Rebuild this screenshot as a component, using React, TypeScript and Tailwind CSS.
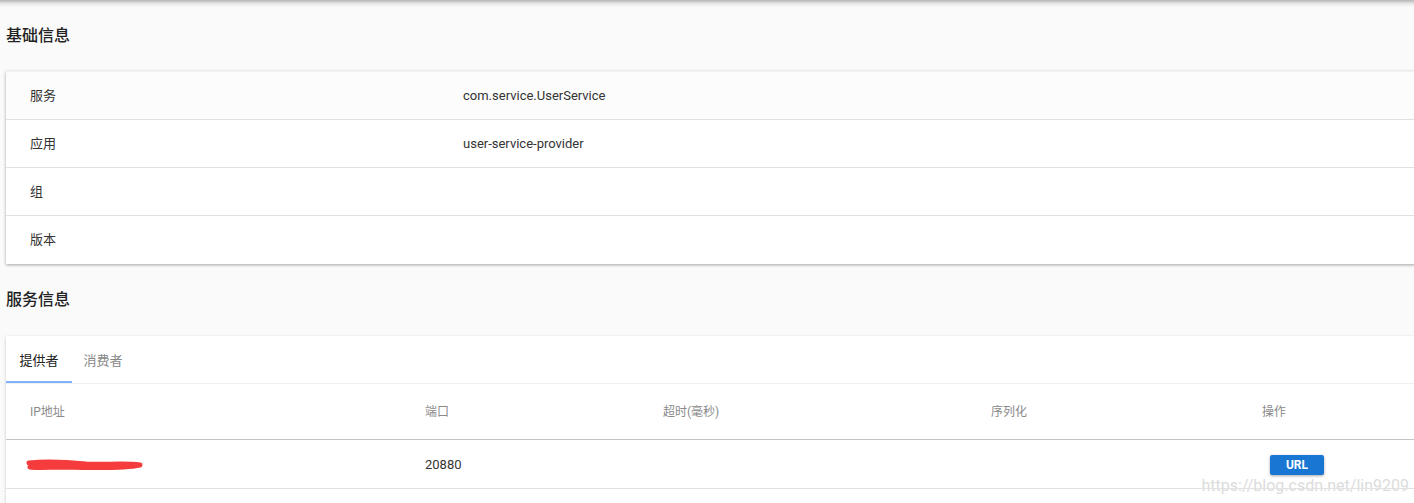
const font = "font-['Roboto','Noto_Sans_CJK_SC',sans-serif]";

const basicRows = [
  { label: '服务', value: 'com.service.UserService' },
  { label: '应用', value: 'user-service-provider' },
  { label: '组', value: '' },
  { label: '版本', value: '' },
];

const cols = ['w-[395px]', 'w-[238px]', 'w-[328px]', 'w-[271px]', 'flex-1'];

function Scribble() {
  return (
    <svg width="120" height="16" viewBox="0 0 120 16" className="block">
      <path
        d="M3 6 C20 4 40 5 60 7 C80 8 100 6 114 8 C100 11 70 11 40 10 C25 10 10 11 4 10"
        fill="none"
        stroke="#f53b3b"
        strokeWidth="5"
        strokeLinecap="round"
        strokeLinejoin="round"
      />
      <path d="M8 8 L112 8" stroke="#f53b3b" strokeWidth="4" strokeLinecap="round" />
    </svg>
  );
}

export default function App() {
  return (
    <div className={`${font} relative h-[503px] w-[1414px] overflow-hidden bg-[#fafafa] pl-[6px] text-[13px] text-[#333]`}>
      <div className="absolute left-0 top-0 h-[7px] w-full bg-gradient-to-b from-[#b5b5b5] via-[#e6e6e6] to-transparent" />

      <div className="flex h-[71px] items-center text-[16px] font-medium text-[#222]">基础信息</div>

      <div className="w-[1440px] border-t border-[#f2f2f2] bg-white shadow-[0_1px_3px_rgba(0,0,0,0.35)]">
        {basicRows.map((r, i) => (
          <div
            key={r.label}
            className={`flex h-12 items-center ${i === 0 ? 'bg-[#fcfcfc]' : ''} ${i < basicRows.length - 1 ? 'border-b border-[#e0e0e0]' : ''}`}
          >
            <div className="w-[457px] pl-6">{r.label}</div>
            <div>{r.value}</div>
          </div>
        ))}
      </div>

      <div className="flex h-[72px] items-center text-[16px] font-medium text-[#222]">服务信息</div>

      <div className="w-[1440px] bg-white shadow-[0_1px_3px_rgba(0,0,0,0.2)]">
        <div className="flex h-12 border-b border-[#f0f0f0]">
          <div className="flex w-[66px] flex-col">
            <div className="flex flex-1 items-center justify-center pt-[4px] text-[#222]">提供者</div>
            <div className="h-[2px] bg-[#82b1ff]" />
          </div>
          <div className="flex w-[62px] items-center justify-center pt-[2px] text-[#888]">消费者</div>
        </div>

        <div className="flex h-[56px] items-center border-b border-[#c4c4c4] text-[12px] text-[#8a8a8a]">
          {['IP地址', '端口', '超时(毫秒)', '序列化', '操作'].map((h, i) => (
            <div key={h} className={`${cols[i]} pl-6`}>
              {h}
            </div>
          ))}
        </div>

        <div className="flex h-[49px] items-center border-b border-[#e0e0e0] pt-[2px]">
          <div className={`${cols[0]} pl-[20px]`}>
            <Scribble />
          </div>
          <div className={`${cols[1]} pl-6`}>20880</div>
          <div className={`${cols[2]} pl-6`} />
          <div className={`${cols[3]} pl-6`} />
          <div className={`${cols[4]} pl-8`}>
            <button className="flex h-[20px] w-[54px] items-center justify-center rounded-[2px] bg-[#1976d2] text-[12px] font-bold text-white shadow-[0_1px_3px_rgba(0,0,0,0.35)]">
              URL
            </button>
          </div>
        </div>
        <div className="h-12" />
      </div>

      <div className="absolute right-[5px] top-[474px] text-[16px] text-[#dcdcdc] [text-shadow:0_0_1px_#fff]">
        https://blog.csdn.net/lin9209
      </div>
    </div>
  );
}
